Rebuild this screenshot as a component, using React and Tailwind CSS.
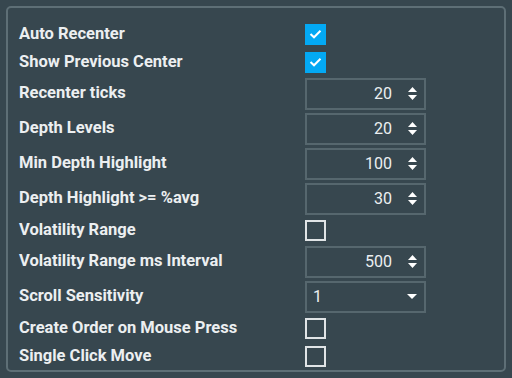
import { useState } from 'react';

const rows = [
    { label: 'Auto Recenter', type: 'check', value: true },
    { label: 'Show Previous Center', type: 'check', value: true },
    { label: 'Recenter ticks', type: 'number', value: 20 },
    { label: 'Depth Levels', type: 'number', value: 20 },
    { label: 'Min Depth Highlight', type: 'number', value: 100 },
    { label: 'Depth Highlight >= %avg', type: 'number', value: 30 },
    { label: 'Volatility Range', type: 'check', value: false },
    { label: 'Volatility Range ms Interval', type: 'number', value: 500 },
    { label: 'Scroll Sensitivity', type: 'select', value: '1' },
    { label: 'Create Order on Mouse Press', type: 'check', value: false },
    { label: 'Single Click Move', type: 'check', value: false },
];

export default function App() {
    const [values, setValues] = useState(rows.map((r) => r.value));

    const update = (i, v) => setValues((prev) => prev.map((p, j) => (j === i ? v : p)));

    return (
        <div className="w-[512px] h-[378px] bg-[#37474f] p-[6px] font-['Roboto',sans-serif] text-[#eceff1]">
            <div className="h-full border-2 border-[#5e6f76] rounded-[5px] pl-[11px] pt-[12px]">
                {rows.map((row, i) => (
                    <div
                        key={row.label}
                        className={`flex items-center ${row.type === 'check' ? 'h-[28px]' : 'h-[35px]'}`}
                    >
                        <div className="w-[286px] text-[16.5px] font-bold leading-none">{row.label}</div>
                        {row.type === 'check' && (
                            <Checkbox checked={values[i]} onChange={() => update(i, !values[i])} />
                        )}
                        {row.type === 'number' && (
                            <NumberBox value={values[i]} onChange={(v) => update(i, v)} />
                        )}
                        {row.type === 'select' && <SelectBox value={values[i]} />}
                    </div>
                ))}
            </div>
        </div>
    );
}

function Checkbox({ checked, onChange }) {
    if (checked) {
        return (
            <button onClick={onChange} className="w-[21px] h-[21px] bg-[#03a9f4] flex items-center justify-center">
                <svg width="13" height="10" viewBox="0 0 13 10">
                    <path d="M1.5 5 L5 8.3 L11.5 1.8" fill="none" stroke="white" strokeWidth="2" />
                </svg>
            </button>
        );
    }
    return <button onClick={onChange} className="w-[21px] h-[21px] border-2 border-[#e0e4e6]" />;
}

function NumberBox({ value, onChange }) {
    return (
        <div className="w-[121px] h-[32px] border-2 border-[#56676e] flex items-center justify-end pr-[7px]">
            <span className="text-[16px] leading-none">{value}</span>
            <div className="flex flex-col items-center gap-[3px] ml-[15px] w-[10px]">
                <button onClick={() => onChange(value + 1)}>
                    <svg width="9" height="5" viewBox="0 0 9 5" className="block">
                        <path d="M0 5 L4.5 0 L9 5 Z" fill="white" />
                    </svg>
                </button>
                <button onClick={() => onChange(value - 1)}>
                    <svg width="9" height="5" viewBox="0 0 9 5" className="block">
                        <path d="M0 0 L4.5 5 L9 0 Z" fill="white" />
                    </svg>
                </button>
            </div>
        </div>
    );
}

function SelectBox({ value }) {
    return (
        <div className="w-[121px] h-[32px] border-2 border-[#56676e] flex items-center justify-between pl-[6px] pr-[7px]">
            <span className="text-[16px] leading-none">{value}</span>
            <svg width="10" height="5" viewBox="0 0 10 5" className="block">
                <path d="M0 0 L5 5 L10 0 Z" fill="white" />
            </svg>
        </div>
    );
}
